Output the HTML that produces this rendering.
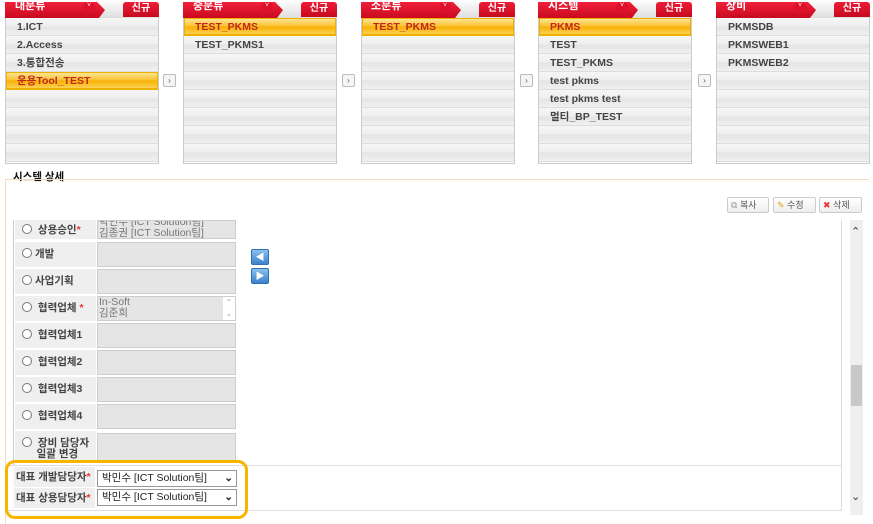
<!DOCTYPE html><html><head><meta charset="utf-8"><style>
*{margin:0;padding:0;box-sizing:border-box}
body{width:873px;height:524px;background:#fff;position:relative;overflow:hidden;font-family:"Liberation Sans","Noto Sans CJK KR",sans-serif;font-size:11px;color:#333}
.a{position:absolute}
.col{position:absolute;top:0;width:154px}
.hd{position:absolute;top:0;left:0;width:154px;height:18px;background:linear-gradient(#fff,#ddd)}
.tab{position:absolute;left:0;top:2px;width:100px;height:16px;background:linear-gradient(#f0203a,#c80a20);clip-path:polygon(0 0,92px 0,100px 8px,94px 16px,0 16px);color:#fff;font-weight:bold;font-size:11px;padding-left:10px;line-height:8px}
.dd{position:absolute;left:78px;top:2px;width:12px;height:10px;border-radius:50%;background:#e0102c;color:#fff;font-size:7px;text-align:center;line-height:8px}
.new{position:absolute;right:0;top:2px;width:36px;height:15px;background:linear-gradient(#ee1c36,#c5091f);border-radius:3px 3px 0 0;color:#fff;font-weight:bold;font-size:10px;text-align:center;line-height:14px}
.list{position:absolute;top:18px;left:0;width:154px;height:146px;border:1px solid #ccc;border-top:none}
.r{height:18px;border-bottom:1px solid #ddd;background:linear-gradient(#f6f6f6 0,#eee 50%,#e4e4e4 51%,#f0f0f0 100%);padding-left:11px;padding-top:2px;line-height:15px;font-weight:bold;font-size:10.5px;color:#444}
.sel{background:linear-gradient(#fde9a0,#fbc02d 50%,#f7b000 51%,#fcd560);color:#c1271c;box-shadow:inset 0 0 0 1px #f0b000;border-bottom:1px solid #f0b000}
.arr{position:absolute;top:74px;width:13px;height:13px;border:1px solid #bbb;background:#f5f5f5;font-size:8px;text-align:center;line-height:11px;color:#555;border-radius:2px}
.lab{position:absolute;left:15px;width:81px;background:#efefef;font-weight:bold;font-size:10.5px;color:#444}
.val{position:absolute;left:97px;width:139px;background:#e5e5e5;border:1px solid #ccc}
.rad{display:inline-block;width:10px;height:10px;border:1px solid #777;border-radius:50%;background:#fff;vertical-align:-1px;margin-right:3px}
.btn{position:absolute;top:197px;height:16px;border:1px solid #ccc;background:linear-gradient(#fff,#eee);font-size:9px;color:#555;line-height:14px;border-radius:2px}
.sl{position:absolute;left:97px;width:140px;height:17px;border:1px solid #999;background:#fff;font-size:10.5px;padding-left:4px;line-height:15px;color:#222}
</style></head><body>

<div class="col" style="left:5px"><div class="hd"></div><div class="tab">대분류</div><div class="dd">˅</div><div class="new">신규</div>
<div class="list"><div class="r">1.ICT</div><div class="r">2.Access</div><div class="r">3.통합전송</div><div class="r sel">운용Tool_TEST</div><div class="r"></div><div class="r"></div><div class="r"></div><div class="r"></div></div></div>
<div class="arr" style="left:163px">›</div>

<div class="col" style="left:183px"><div class="hd"></div><div class="tab">중분류</div><div class="dd">˅</div><div class="new">신규</div>
<div class="list"><div class="r sel">TEST_PKMS</div><div class="r">TEST_PKMS1</div><div class="r"></div><div class="r"></div><div class="r"></div><div class="r"></div><div class="r"></div><div class="r"></div></div></div>
<div class="arr" style="left:342px">›</div>

<div class="col" style="left:361px"><div class="hd"></div><div class="tab">소분류</div><div class="dd">˅</div><div class="new">신규</div>
<div class="list"><div class="r sel">TEST_PKMS</div><div class="r"></div><div class="r"></div><div class="r"></div><div class="r"></div><div class="r"></div><div class="r"></div><div class="r"></div></div></div>
<div class="arr" style="left:520px">›</div>

<div class="col" style="left:538px"><div class="hd"></div><div class="tab">시스템</div><div class="dd">˅</div><div class="new">신규</div>
<div class="list"><div class="r sel">PKMS</div><div class="r">TEST</div><div class="r">TEST_PKMS</div><div class="r">test pkms</div><div class="r">test pkms test</div><div class="r">멀티_BP_TEST</div><div class="r"></div><div class="r"></div></div></div>
<div class="arr" style="left:698px">›</div>

<div class="col" style="left:716px"><div class="hd"></div><div class="tab">장비</div><div class="dd">˅</div><div class="new">신규</div>
<div class="list"><div class="r">PKMSDB</div><div class="r">PKMSWEB1</div><div class="r">PKMSWEB2</div><div class="r"></div><div class="r"></div><div class="r"></div><div class="r"></div><div class="r"></div></div></div>

<div class="a" style="left:13px;top:169px;font-weight:bold;font-size:10.5px;color:#111">시스템 상세</div>
<div class="a" style="left:5px;top:179px;width:864px;height:1px;background:#f8d8b8"></div>
<div class="a" style="left:5px;top:179px;width:1px;height:345px;background:#f8d8b8"></div>

<div class="btn" style="left:727px;width:42px"><span style="color:#999;padding-left:3px">⧉</span> 복사</div>
<div class="btn" style="left:773px;width:43px"><span style="color:#e0a020;padding-left:3px">✎</span> 수정</div>
<div class="btn" style="left:819px;width:43px"><span style="color:#e33;padding-left:3px">✖</span> 삭제</div>

<div class="a" style="left:841px;top:220px;width:1px;height:290px;background:#ddd"></div>
<div class="a" style="left:850px;top:220px;width:13px;height:295px;background:#efefef"></div>
<div class="a" style="left:851px;top:365px;width:11px;height:41px;background:#c8c8c8"></div>
<div class="a" style="left:851px;top:225px;font-size:11px;color:#333">⌃</div>
<div class="a" style="left:851px;top:490px;font-size:11px;color:#333">⌄</div>

<div class="a" style="left:13px;top:220px;width:1px;height:245px;background:#ccc"></div>
<div class="lab" style="top:220px;height:19px;padding:2px 0 0 7px"><span class="rad"></span> 상용승인<span style="color:#e33">*</span></div>
<div class="val" style="top:220px;height:19px;color:#777;font-weight:normal;font-size:10.5px;line-height:11px;overflow:hidden;padding-left:1px"><div style="margin-top:-4px">박민수 [ICT Solution팀]<br>김종권 [ICT Solution팀]</div></div>

<div class="lab" style="top:242px;height:25px;line-height:25px;padding-left:7px"><span class="rad"></span>개발</div><div class="val" style="top:242px;height:25px"></div>
<div class="lab" style="top:269px;height:25px;line-height:25px;padding-left:7px"><span class="rad"></span>사업기획</div><div class="val" style="top:269px;height:25px"></div>
<div class="lab" style="top:296px;height:25px;line-height:25px;padding-left:7px"><span class="rad"></span> 협력업체 <span style="color:#e33">*</span></div>
<div class="val" style="top:296px;height:25px;color:#777;font-size:10.5px;line-height:11px;overflow:hidden;padding-left:1px">In-Soft<br>김준희<div class="a" style="right:0;top:0;width:12px;height:23px;background:#fff;color:#aaa;font-size:8px;line-height:11px;text-align:center">⌃<br>⌄</div></div>
<div class="lab" style="top:323px;height:25px;line-height:25px;padding-left:7px"><span class="rad"></span> 협력업체1</div><div class="val" style="top:323px;height:25px"></div>
<div class="lab" style="top:350px;height:25px;line-height:25px;padding-left:7px"><span class="rad"></span> 협력업체2</div><div class="val" style="top:350px;height:25px"></div>
<div class="lab" style="top:377px;height:25px;line-height:25px;padding-left:7px"><span class="rad"></span> 협력업체3</div><div class="val" style="top:377px;height:25px"></div>
<div class="lab" style="top:404px;height:25px;line-height:25px;padding-left:7px"><span class="rad"></span> 협력업체4</div><div class="val" style="top:404px;height:25px"></div>
<div class="lab" style="top:431px;height:32px;line-height:11px;padding:6px 0 0 7px"><span class="rad"></span> 장비 담당자<br>&nbsp;&nbsp;&nbsp;&nbsp;&nbsp;일괄 변경</div><div class="val" style="top:433px;height:30px"></div>

<div class="a" style="left:251px;top:249px;width:18px;height:16px;background:linear-gradient(#8cc0ee,#3b82cc);border:1px solid #3070b0;border-radius:2px;color:#fff;font-size:9px;text-align:center;line-height:14px">◀</div>
<div class="a" style="left:251px;top:268px;width:18px;height:16px;background:linear-gradient(#8cc0ee,#3b82cc);border:1px solid #3070b0;border-radius:2px;color:#fff;font-size:9px;text-align:center;line-height:14px">▶</div>

<div class="a" style="left:5px;top:465px;width:837px;height:1px;background:#ddd"></div>
<div class="a" style="left:5px;top:510px;width:837px;height:1px;background:#ddd"></div>
<div class="lab" style="top:467px;height:20px;line-height:20px;padding-left:2px;left:14px">대표 개발담당자<span style="color:#e33">*</span></div>
<div class="lab" style="top:488px;height:20px;line-height:20px;padding-left:2px;left:14px">대표 상용담당자<span style="color:#e33">*</span></div>
<div class="sl" style="top:470px">박민수 [ICT Solution팀]<span class="a" style="right:3px;top:0;font-weight:bold">⌄</span></div>
<div class="sl" style="top:489px">박민수 [ICT Solution팀]<span class="a" style="right:3px;top:0;font-weight:bold">⌄</span></div>

<div class="a" style="left:5px;top:460px;width:243px;height:59px;border:3px solid #f7b500;border-radius:10px"></div>
</body></html>
